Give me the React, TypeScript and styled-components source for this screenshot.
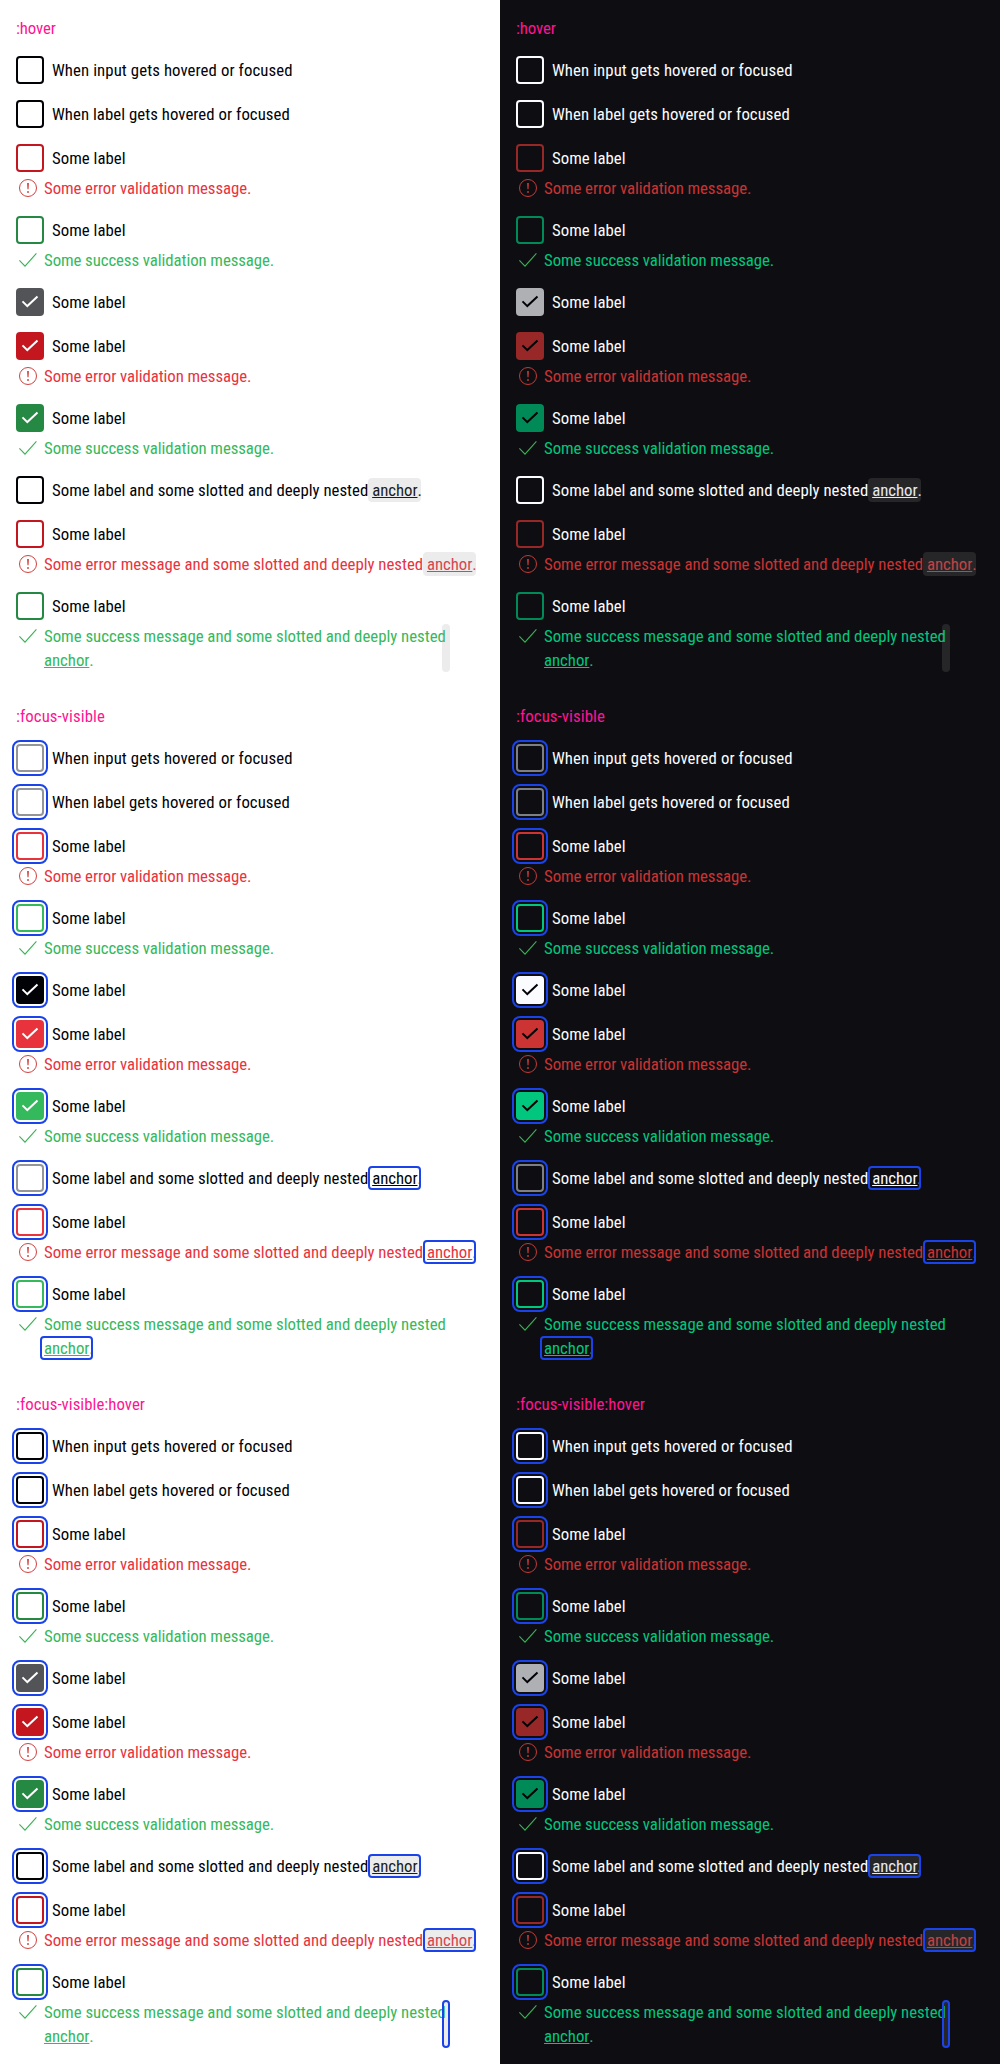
import React from 'react';
import styled, { createGlobalStyle, css, ThemeProvider } from 'styled-components';

type State = 'hover' | 'focus' | 'focusHover';
type Status = 'none' | 'error' | 'success';

interface Palette {
  background: string;
  primary: string;
  onControl: string;
  rest: string;
  hover: string;
  checkedHover: string;
  error: string;
  errorHover: string;
  errorIcon: string;
  success: string;
  successHover: string;
  successIcon: string;
}

const light: Palette = {
  background: '#ffffff',
  primary: '#010205',
  onControl: '#ffffff',
  rest: '#949598',
  hover: '#010205',
  checkedHover: '#535457',
  error: '#e8333d',
  errorHover: '#c4161f',
  errorIcon: '#d0423d',
  success: '#34b95c',
  successHover: '#258943',
  successIcon: '#39b254',
};

const dark: Palette = {
  background: '#0e0e12',
  primary: '#fbfcff',
  onControl: '#010205',
  rest: '#7c7f83',
  hover: '#fbfcff',
  checkedHover: '#afb0b3',
  error: '#cc3333',
  errorHover: '#982728',
  errorIcon: '#c23a36',
  success: '#00c77d',
  successHover: '#008a57',
  successIcon: '#39b254',
};

const FOCUS = '#1a44ea';

const PaletteContext = React.createContext<Palette>(light);

const GlobalStyle = createGlobalStyle`
  *, *::before, *::after { box-sizing: border-box; }
  body {
    margin: 0;
    font: 400 16.8px/24px 'Roboto Condensed', Roboto, 'Liberation Sans', sans-serif;
  }
`;

const Page = styled.main`
  display: grid;
  grid-template-columns: 1fr 1fr;
  width: 1000px;
`;

const Panel = styled.div<{ $palette: Palette }>`
  background: ${(p) => p.$palette.background};
  color: ${(p) => p.$palette.primary};
`;

const Section = styled.section`
  display: flex;
  flex-direction: column;
  gap: 16px;
  height: 688px;
  padding: 16px;
`;

const Heading = styled.p<{ $track: number }>`
  margin: 0;
  color: #ff1493;
  letter-spacing: ${(p) => p.$track}px;
`;

const Field = styled.div`
  display: flex;
  flex-direction: column;
  gap: 4px;
`;

const Label = styled.label`
  display: flex;
  align-items: center;
  gap: 8px;
  height: 28px;
`;

const tone = (p: Palette, status: Status, hovered: boolean, checked: boolean) => {
  if (status === 'error') return hovered ? p.errorHover : p.error;
  if (status === 'success') return hovered ? p.successHover : p.success;
  if (checked) return hovered ? p.checkedHover : p.primary;
  return hovered ? p.hover : p.rest;
};

const Box = styled.span<{ $status: Status; $state: State; $checked: boolean }>`
  display: flex;
  flex: none;
  width: 28px;
  height: 28px;
  border-radius: 4px;
  ${(p) => {
    const color = tone(p.theme as Palette, p.$status, p.$state !== 'focus', p.$checked);
    return css`
      border: ${p.$checked ? '0' : `2px solid ${color}`};
      background: ${p.$checked ? color : 'transparent'};
    `;
  }}
  ${(p) =>
    p.$state !== 'hover' &&
    css`
      outline: 2px solid ${FOCUS};
      outline-offset: 2px;
    `}
`;

const Message = styled.div<{ $status: Status }>`
  display: flex;
  gap: 4px;
  color: ${(p) => {
    const t = p.theme as Palette;
    return p.$status === 'error' ? t.error : t.success;
  }};
`;

const MessageIcon = styled.svg<{ $status: Status }>`
  flex: none;
  width: 24px;
  height: 24px;
  color: ${(p) => {
    const t = p.theme as Palette;
    return p.$status === 'error' ? t.errorIcon : t.successIcon;
  }};
`;

const Text = styled.span<{ $track: number }>`
  white-space: pre;
  letter-spacing: ${(p) => p.$track}px;
`;

const Lines = styled.span`
  display: flex;
  flex-direction: column;
  align-items: flex-start;
`;

const Line = styled.span`
  display: flex;
  height: 24px;
`;

const frame = css<{ $state: State }>`
  content: '';
  position: absolute;
  border-radius: 4px;
  background: ${(p) => (p.$state === 'focus' ? 'transparent' : 'rgba(148, 149, 152, 0.18)')};
  border: ${(p) => (p.$state === 'hover' ? '0' : `2px solid ${FOCUS}`)};
`;

const AnchorBox = styled.span<{ $state: State; $framed: boolean }>`
  display: block;
  position: relative;
  z-index: 1;
  ${(p) =>
    p.$framed &&
    css`
      &::after {
        ${frame}
        inset: 0 -4px;
      }
    `}
`;

const AnchorLink = styled.a`
  color: inherit;
  letter-spacing: -0.036px;
  text-decoration: underline;
  text-decoration-thickness: 1px;
  text-underline-offset: 1px;
  text-decoration-skip-ink: none;
`;

/* Zero-width fragment left at the line end when the link wraps to the next line. */
const WrapMarker = styled.span<{ $state: State }>`
  position: relative;
  width: 0;
  &::after {
    ${frame}
    top: 0;
    left: -3.5px;
    width: 8px;
    height: 48px;
  }
`;

function Tick() {
  const t = React.useContext(PaletteContext);
  return (
    <svg width="28" height="28" viewBox="0 0 28 28" fill="none" aria-hidden="true">
      <path d="M6.5 13.4 11.3 18.1 21.5 8.6" stroke={t.onControl} strokeWidth="2" />
    </svg>
  );
}

function StatusIcon({ status }: { status: Status }) {
  return (
    <MessageIcon $status={status} viewBox="0 0 24 24" fill="none" aria-hidden="true">
      {status === 'error' ? (
        <>
          <circle cx="12" cy="12" r="8.5" stroke="currentColor" strokeWidth="1" />
          <path d="M11.1 7h1.8l-.35 6.3h-1.1z" fill="currentColor" />
          <circle cx="12" cy="16" r="0.95" fill="currentColor" />
        </>
      ) : (
        <path d="M3.4 12.3 9 18.2 20.4 5.4" stroke="currentColor" strokeWidth="1.1" />
      )}
    </MessageIcon>
  );
}

function Anchor({ state, framed = true }: { state: State; framed?: boolean }) {
  return (
    <>
      <AnchorBox $state={state} $framed={framed}>
        <AnchorLink>anchor</AnchorLink>
      </AnchorBox>
      <Text $track={0}>.</Text>
    </>
  );
}

interface CheckboxProps {
  state: State;
  status?: Status;
  checked?: boolean;
  label?: React.ReactNode;
  message?: React.ReactNode;
}

function Checkbox({ state, status = 'none', checked = false, label, message }: CheckboxProps) {
  return (
    <Field>
      <Label>
        <Box $status={status} $state={state} $checked={checked}>
          {checked && <Tick />}
        </Box>
        {label ?? <Text $track={0.02}>Some label</Text>}
      </Label>
      {status !== 'none' && (
        <Message $status={status}>
          <StatusIcon status={status} />
          {message ?? (
            <Text $track={-0.075}>
              {status === 'error' ? 'Some error validation message.' : 'Some success validation message.'}
            </Text>
          )}
        </Message>
      )}
    </Field>
  );
}

function StateSection({ state, title, track }: { state: State; title: string; track: number }) {
  return (
    <Section>
      <Heading $track={track}>{title}</Heading>
      <Checkbox state={state} label={<Text $track={0.085}>When input gets hovered or focused</Text>} />
      <Checkbox state={state} label={<Text $track={0.045}>When label gets hovered or focused</Text>} />
      <Checkbox state={state} status="error" />
      <Checkbox state={state} status="success" />
      <Checkbox state={state} checked />
      <Checkbox state={state} checked status="error" />
      <Checkbox state={state} checked status="success" />
      <Checkbox
        state={state}
        label={
          <Line>
            <Text $track={0.005}>{'Some label and some slotted and deeply nested '}</Text>
            <Anchor state={state} />
          </Line>
        }
      />
      <Checkbox
        state={state}
        status="error"
        message={
          <Line>
            <Text $track={-0.007}>{'Some error message and some slotted and deeply nested '}</Text>
            <Anchor state={state} />
          </Line>
        }
      />
      <Checkbox
        state={state}
        status="success"
        message={
          <Lines>
            <Line>
              <Text $track={-0.012}>Some success message and some slotted and deeply nested</Text>
              {state !== 'focus' && <WrapMarker $state={state} />}
            </Line>
            <Line>
              <Anchor state={state} framed={state === 'focus'} />
            </Line>
          </Lines>
        }
      />
    </Section>
  );
}

export default function App() {
  return (
    <>
      <GlobalStyle />
      <Page>
        {[light, dark].map((palette) => (
          <ThemeProvider key={palette.background} theme={palette}>
            <PaletteContext.Provider value={palette}>
              <Panel $palette={palette}>
                <StateSection state="hover" title=":hover" track={-0.08} />
                <StateSection state="focus" title=":focus-visible" track={0.07} />
                <StateSection state="focusHover" title=":focus-visible:hover" track={0.035} />
              </Panel>
            </PaletteContext.Provider>
          </ThemeProvider>
        ))}
      </Page>
    </>
  );
}
